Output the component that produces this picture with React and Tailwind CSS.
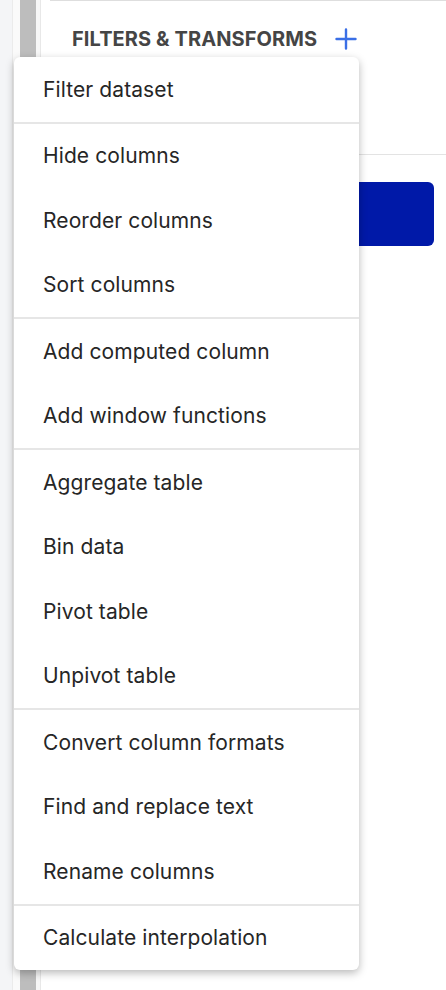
import React from 'react';

const groups = [
  ['Filter dataset'],
  ['Hide columns', 'Reorder columns', 'Sort columns'],
  ['Add computed column', 'Add window functions'],
  ['Aggregate table', 'Bin data', 'Pivot table', 'Unpivot table'],
  ['Convert column formats', 'Find and replace text', 'Rename columns'],
  ['Calculate interpolation'],
];

const TransformMenu = () => (
  <div className="absolute left-[14px] top-[57px] w-[345px] bg-white rounded-[6px] shadow-[0_3px_8px_rgba(0,0,0,0.28)] overflow-hidden z-10">
    {groups.map((items, gi) => (
      <div key={gi} className={gi > 0 ? 'border-t-2 border-[#e6e6e6]' : ''}>
        {items.map((label) => (
          <button
            key={label}
            type="button"
            className="w-full h-[64.5px] flex items-center pl-[29px] text-left text-[21px] text-[#262626] tracking-[0.1px] hover:bg-gray-50"
          >
            {label}
          </button>
        ))}
      </div>
    ))}
  </div>
);

export default function App() {
  return (
    <div className="relative w-[446px] h-[990px] flex bg-white overflow-hidden" style={{ fontFamily: 'Inter, "Liberation Sans", sans-serif' }}>
      {/* left rail + scrollbar */}
      <div className="w-[12px] bg-[#f4f5f7]" />
      <div className="w-px bg-[#ebebeb]" />
      <div className="w-[7px] bg-[#fafafa]" />
      <div className="w-[16px] bg-[#bdbdbd]" />
      <div className="w-[4px] bg-[#f7f7f7]" />
      <div className="w-px bg-[#e8e8e8]" />

      {/* panel */}
      <div className="flex-1 flex flex-col">
        <div className="ml-[9px] h-px bg-[#dedede]" />
        <div className="flex items-center h-[47px] pl-[31px] mt-[14px] gap-[18px]">
          <h2 className="text-[20px] font-bold text-[#454545] tracking-[0.1px] uppercase">Filters &amp; Transforms</h2>
          <svg width="22" height="22" viewBox="0 0 22 22" fill="none" stroke="#3a6fe6" strokeWidth="2.4" strokeLinecap="round">
            <path d="M11 1.5v19M1.5 11h19" />
          </svg>
        </div>
        <div className="mt-[92px] ml-[9px] h-px bg-[#e3e3e3]" />
        <div className="mt-[27px] ml-[31px] mr-[12px] h-[64px] rounded-[6px] bg-[#0019a8]" />
      </div>

      <TransformMenu />
    </div>
  );
}
